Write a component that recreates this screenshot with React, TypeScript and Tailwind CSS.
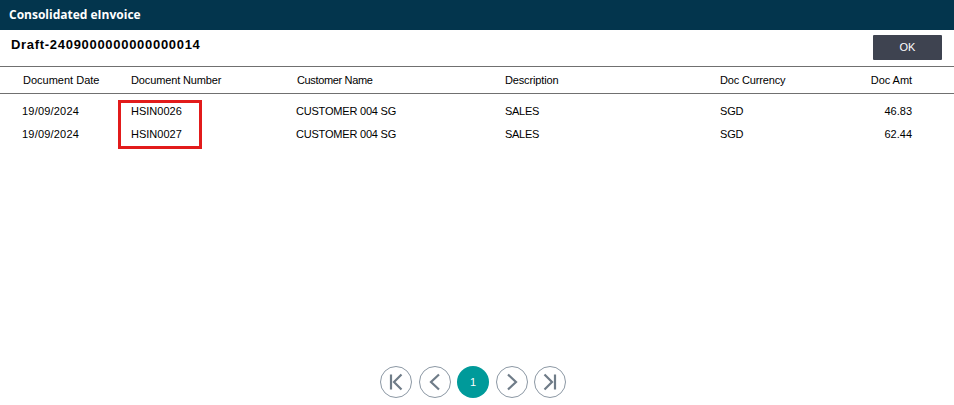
const COLS = "grid grid-cols-[109px_165px_209px_215px_120px_72px] pl-[22px]";

const rows = [
  { date: "19/09/2024", num: "HSIN0026", cust: "CUSTOMER 004 SG", desc: "SALES", cur: "SGD", amt: "46.83" },
  { date: "19/09/2024", num: "HSIN0027", cust: "CUSTOMER 004 SG", desc: "SALES", cur: "SGD", amt: "62.44" },
];

function PageBtn({ children, active }: { children: React.ReactNode; active?: boolean }) {
  return (
    <div
      className={
        active
          ? "w-8 h-8 rounded-full bg-[#009a9a] text-white flex items-center justify-center text-[11px]"
          : "w-8 h-8 rounded-full border border-[#8c98a4] flex items-center justify-center"
      }
    >
      {children}
    </div>
  );
}

const icon = { fill: "none", stroke: "#6f7c88", strokeWidth: 2.2 };

export default function App() {
  return (
    <div className="w-[954px] h-[405px] bg-white flex flex-col relative overflow-hidden font-['Liberation_Sans',sans-serif] text-black">
      <div className="h-[30px] bg-[#03354d] flex items-center pl-[9px] text-white text-[12px] font-bold font-['Open_Sans',sans-serif]">
        Consolidated eInvoice
      </div>
      <div className="h-[36px] flex items-start justify-between pl-[11px] pr-[12px]">
        <div className="text-[13px] font-bold mt-[7px] leading-[15px] tracking-[0.7px]">Draft-2409000000000000014</div>
        <div className="w-[69px] h-[25px] mt-[5px] bg-[#3e4350] rounded-[1px] text-white text-[11px] flex items-center justify-center">OK</div>
      </div>
      <div className={`${COLS} h-[28px] border-y border-[#707070] items-center text-[11px] box-border`}>
        <div className="pl-px">Document Date</div>
        <div className="tracking-[-0.13px]">Document Number</div>
        <div className="pl-px tracking-[-0.35px]">Customer Name</div>
        <div className="tracking-[-0.15px]">Description</div>
        <div className="tracking-[-0.15px]">Doc Currency</div>
        <div className="text-right tracking-[-0.05px]">Doc Amt</div>
      </div>
      <div className="pt-[6px] flex-1 text-[11px]">
        {rows.map((r) => (
          <div key={r.num} className={`${COLS} h-[23px] items-center`}>
            <div className="tracking-[0.2px]">{r.date}</div>
            <div>{r.num}</div>
            <div className="tracking-[-0.2px]">{r.cust}</div>
            <div className="tracking-[-0.3px]">{r.desc}</div>
            <div className="tracking-[-0.2px]">{r.cur}</div>
            <div className="text-right">{r.amt}</div>
          </div>
        ))}
      </div>
      <div className="h-[39px] flex justify-center items-start gap-[6.5px] pr-[8px]">
        <PageBtn>
          <svg width="20" height="20" viewBox="0 0 20 20" {...icon}><path d="M5 2.5v15M15.5 2.5L8 10l7.5 7.5" /></svg>
        </PageBtn>
        <PageBtn>
          <svg width="20" height="20" viewBox="0 0 20 20" {...icon}><path d="M14 2.5L6 10l8 7.5" /></svg>
        </PageBtn>
        <PageBtn active>1</PageBtn>
        <PageBtn>
          <svg width="20" height="20" viewBox="0 0 20 20" {...icon}><path d="M6 2.5l8 7.5-8 7.5" /></svg>
        </PageBtn>
        <PageBtn>
          <svg width="20" height="20" viewBox="0 0 20 20" {...icon}><path d="M15 2.5v15M4.5 2.5L12 10l-7.5 7.5" /></svg>
        </PageBtn>
      </div>
      <div className="absolute left-[118px] top-[100px] w-[84px] h-[49px] border-[3px] border-[#e21b1b]" />
    </div>
  );
}
